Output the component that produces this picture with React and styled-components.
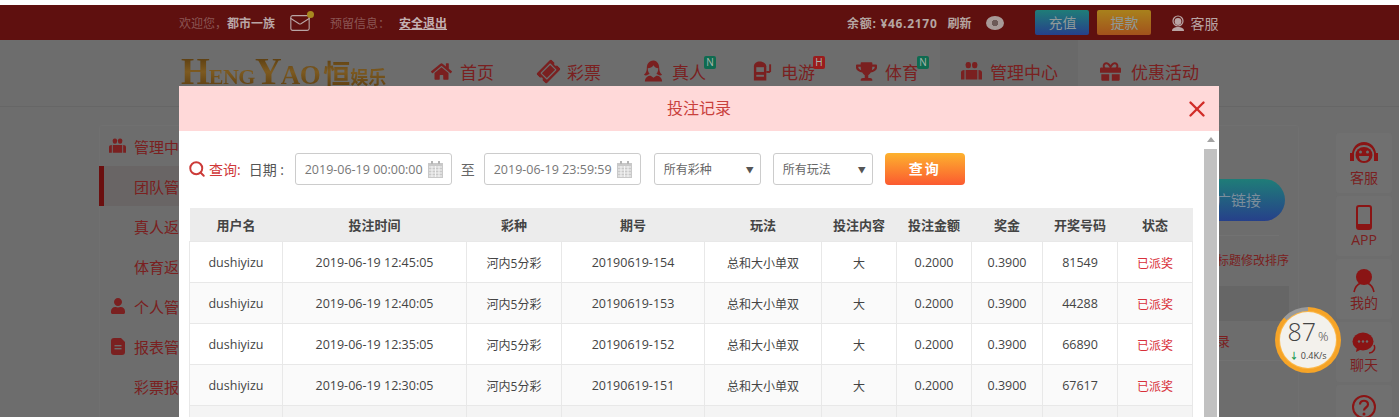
import styled, { createGlobalStyle } from 'styled-components';
import { FaHome, FaTicketAlt, FaTrophy, FaGift, FaUser } from 'react-icons/fa';
import { Search, X, Mail } from 'lucide-react';

const sans = `"Open Sans", "Noto Sans CJK SC", sans-serif`;
const wine = '#7a2020';

const navItems = [
  { label: '首页', width: 107, Icon: FaHome },
  { label: '彩票', width: 105, Icon: FaTicketAlt, tilt: true },
  { label: '真人', width: 109, draw: 'live', badge: 'N' },
  { label: '电游', width: 104, draw: 'slot', badge: 'H' },
  { label: '体育', width: 84, Icon: FaTrophy, badge: 'N' },
  { label: '管理中心', width: 138, draw: 'team', active: true },
  { label: '优惠活动', width: 120, Icon: FaGift, gap: 22, wide: true },
];

const sideItems = [
  { label: '管理中心', draw: 'team' },
  { label: '团队管理', active: true },
  { label: '真人返水' },
  { label: '体育返水' },
  { label: '个人管理', Icon: FaUser },
  { label: '报表管理', draw: 'report' },
  { label: '彩票报表' },
];

const columns = [
  ['用户名', 93], ['投注时间', 184], ['彩种', 95], ['期号', 143], ['玩法', 117],
  ['投注内容', 75], ['投注金额', 75], ['奖金', 71], ['开奖号码', 75], ['状态', 75],
];

const records = [
  { time: '12:45:05', issue: '154', code: '81549' },
  { time: '12:40:05', issue: '153', code: '44288' },
  { time: '12:35:05', issue: '152', code: '66890' },
  { time: '12:30:05', issue: '151', code: '67617' },
];

const GlobalStyle = createGlobalStyle`
  html, body { margin: 0; padding: 0; overflow: hidden; background: #fff; }
  * { box-sizing: border-box; }
`;

const LiveIcon = () => (
  <svg width="22" height="24" viewBox="0 0 22 24" fill={wine}>
    <path d="M11 1c-5 0-7 4-7 8 0 3-1 5-3 7 1 1 3 1 4 0l2-1c-1-1-2-3-2-6 2 0 5-1 6-3 1 2 3 3 5 3 0 3-1 5-2 6l2 1c1 1 3 1 4 0-2-2-3-4-3-7 0-4-2-8-6-8z" />
    <path d="M2 23c0-4 3-6 6-6l3 2 3-2c3 0 6 2 6 6z" />
  </svg>
);

const SlotIcon = () => (
  <svg width="22" height="22" viewBox="0 0 22 22" fill={wine}>
    <path d="M2 6c0-3 3-5 6-5s7 2 7 5v15H2z" />
    <rect x="4.5" y="7" width="8" height="5" fill="#6d6d6d" />
    <rect x="4.5" y="15" width="8" height="2" fill="#6d6d6d" />
    <rect x="18" y="4" width="2" height="8" />
    <rect x="15" y="11" width="4" height="2" />
  </svg>
);

const ReportIcon = () => (
  <svg width="14" height="17" viewBox="0 0 14 17" fill={wine}>
    <path d="M3 0h7l4 4v10c0 2-1 3-3 3H3c-2 0-3-1-3-3V3c0-2 1-3 3-3z" />
    <rect x="3.5" y="7" width="7" height="1.4" fill="#6d6d6d" />
    <rect x="3.5" y="10" width="7" height="1.4" fill="#6d6d6d" />
  </svg>
);

const TeamIcon = ({ size = 18 }) => (
  <svg width={size} height={size * 0.84} viewBox="0 0 18 15" fill={wine}>
    <rect x="4" y="0" width="4.500" height="5.500" rx="2" />
    <rect x="9.500" y="0" width="4.500" height="5.500" rx="2" />
    <path d="M0 9c0-1 1-2 3-2v8H0zM4 7h10v8H4zM15 7c2 0 3 1 3 2v6h-3z" />
  </svg>
);

const CalendarIcon = () => (
  <svg width="15" height="17" viewBox="0 0 15 17">
    <rect x="0" y="2" width="15" height="15" fill="#c9c9c9" />
    <rect x="3" y="0" width="2" height="3" fill="#b5b5b5" />
    <rect x="10" y="0" width="2" height="3" fill="#b5b5b5" />
    <path d="M1 6h13M1 9h13M1 12h13M1 15h13M4 5v11M7.500 5v11M11 5v11" stroke="#f4f4f4" strokeWidth="1" />
  </svg>
);

const AgentIcon = () => (
  <svg width="16" height="16" viewBox="0 0 16 16" fill="none">
    <circle cx="8" cy="6" r="5" stroke="#b9a5a5" strokeWidth="1.200" />
    <circle cx="8" cy="6.500" r="3.400" fill="#b9a5a5" />
    <path d="M2 16c0-3 3-4 6-4s6 1 6 4z" fill="#b9a5a5" />
  </svg>
);

const HeadsetIcon = () => (
  <svg width="28" height="26" viewBox="0 0 28 26" fill="#8a1414">
    <path d="M14 0C7 0 3 5 2 11H0v8h4v-8c1-5 5-8 10-8s9 3 10 8v8h4v-8h-2C25 5 21 0 14 0z" />
    <ellipse cx="14" cy="13" rx="8.500" ry="8" />
    <path d="M9 14h10c0 3-2 5-5 5s-5-2-5-5z" fill="#6d6d6d" />
    <circle cx="10.500" cy="10" r="1.500" fill="#6d6d6d" />
    <circle cx="17.500" cy="10" r="1.500" fill="#6d6d6d" />
  </svg>
);

const PhoneIcon = () => (
  <svg width="16" height="25" viewBox="0 0 16 25">
    <rect x="1" y="1" width="14" height="23" rx="2" fill="none" stroke="#8a1414" strokeWidth="2" />
    <rect x="1" y="19" width="14" height="5" fill="#8a1414" />
  </svg>
);

const PersonIcon = () => (
  <svg width="24" height="24" viewBox="0 0 24 24" fill="none">
    <circle cx="12" cy="8" r="8" fill="#8a1414" />
    <path d="M2 23c1-5 4-8 7-9M22 23c-1-5-4-8-7-9" stroke="#8a1414" strokeWidth="1.600" />
  </svg>
);

const ChatIcon = () => (
  <svg width="24" height="23" viewBox="0 0 24 23">
    <path d="M22 13c2 4-1 8-5 8" fill="none" stroke="#8a1414" strokeWidth="1.500" />
    <ellipse cx="11" cy="9.500" rx="10.500" ry="9" fill="#8a1414" />
    <path d="M5 15l-1 5 6-3z" fill="#8a1414" />
    <circle cx="7" cy="9.500" r="1.200" fill="#6d6d6d" />
    <circle cx="11" cy="9.500" r="1.200" fill="#6d6d6d" />
    <circle cx="15" cy="9.500" r="1.200" fill="#6d6d6d" />
  </svg>
);

const HelpIcon = () => (
  <svg width="24" height="24" viewBox="0 0 24 24" fill="none">
    <circle cx="12" cy="12" r="11" stroke="#8a1414" strokeWidth="2" />
    <path d="M8 9.500c0-5 8-5 8 0 0 3-4 3-4 6" stroke="#8a1414" strokeWidth="2.200" />
    <circle cx="12" cy="19" r="1.500" fill="#8a1414" />
  </svg>
);

const railItems = [
  { label: '客服', Icon: HeadsetIcon },
  { label: 'APP', Icon: PhoneIcon },
  { label: '我的', Icon: PersonIcon },
  { label: '聊天', Icon: ChatIcon },
  { label: '', Icon: HelpIcon },
];

const drawings = { live: LiveIcon, slot: SlotIcon, report: ReportIcon, team: TeamIcon };

const App = () => {
  return (
    <Page>
      <GlobalStyle />
      <TopBar>
        <Dim>欢迎您，</Dim>
        <Bright>都市一族</Bright>
        <MailButton>
          <Mail size={22} strokeWidth={1.2} color="#b9a5a5" />
          <MailDot />
        </MailButton>
        <Dim>预留信息：</Dim>
        <Logout>安全退出</Logout>
        <TopRight>
          <Balance>余额: ¥46.2170</Balance>
          <Refresh>刷新</Refresh>
          <EyeDot />
          <TopButton $from="#1f7d78" $to="#26408a">充值</TopButton>
          <TopButton $from="#a8811c" $to="#a2521c">提款</TopButton>
          <Service>
            <AgentIcon />
            <span>客服</span>
          </Service>
        </TopRight>
      </TopBar>

      <NavBar>
        <Logo>
          <LogoBig>H</LogoBig>
          <LogoSmall>ENG</LogoSmall>
          <LogoBig>Y</LogoBig>
          <LogoMid>AO</LogoMid>
          <LogoHan>恒</LogoHan>
          <LogoTail>娱乐</LogoTail>
        </Logo>
        {navItems.map(item => {
          const Drawn = drawings[item.draw];
          return (
            <NavItem key={item.label} $width={item.width} $active={item.active} $gap={item.gap}>
              <NavIcon $tilt={item.tilt}>
                {item.Icon ? <item.Icon size={21} color={wine} /> : <Drawn size={23} />}
              </NavIcon>
              <NavLabel $wide={item.wide}>
                {item.label}
                {item.badge && <Badge $hot={item.badge === 'H'}>{item.badge}</Badge>}
              </NavLabel>
            </NavItem>
          );
        })}
      </NavBar>

      <Content>
        <Panel>
          <Sidebar>
            {sideItems.map(item => {
              const Drawn = drawings[item.draw];
              return (
                <SideRow key={item.label} $active={item.active}>
                  <SideIcon>
                    {item.Icon && <item.Icon size={16} color={wine} />}
                    {Drawn && <Drawn />}
                  </SideIcon>
                  {item.label}
                </SideRow>
              );
            })}
          </Sidebar>
          <Main>
            <PromoButton>推广链接</PromoButton>
            <Rule />
            <Note>点击标题修改排序</Note>
            <GreyRow />
            <RecordRow>投注记录</RecordRow>
          </Main>
        </Panel>
        <Rail>
          {railItems.map(({ label, Icon }) => (
            <RailCard key={label || 'help'} $plain={!label}>
              <Icon />
              {label && <RailLabel>{label}</RailLabel>}
            </RailCard>
          ))}
        </Rail>
      </Content>

      <Modal>
        <ModalHead>
          投注记录
          <CloseButton><X size={26} strokeWidth={2.2} /></CloseButton>
        </ModalHead>
        <ModalBody>
          <ModalContent>
            <Filters>
              <SearchIcon size={18} strokeWidth={2.6} />
              <QueryLabel>查询:</QueryLabel>
              <DateLabel>日期 :</DateLabel>
              <DateField>
                2019-06-19 00:00:00
                <CalendarIcon />
              </DateField>
              <Until>至</Until>
              <DateField>
                2019-06-19 23:59:59
                <CalendarIcon />
              </DateField>
              <SelectField $width={107} $gap={13}>
                所有彩种
                <Arrow>▼</Arrow>
              </SelectField>
              <SelectField $width={100} $gap={12}>
                所有玩法
                <Arrow>▼</Arrow>
              </SelectField>
              <QueryButton>查询</QueryButton>
            </Filters>
            <Table>
              <colgroup>
                {columns.map(([name, width]) => <Col key={name} $width={width} />)}
              </colgroup>
              <thead>
                <tr>
                  {columns.map(([name]) => <Th key={name}>{name}</Th>)}
                </tr>
              </thead>
              <tbody>
                {records.map(row => (
                  <Tr key={row.issue}>
                    <Td>dushiyizu</Td>
                    <Td>2019-06-19 {row.time}</Td>
                    <Td $cn>河内5分彩</Td>
                    <Td>20190619-{row.issue}</Td>
                    <Td $cn>总和大小单双</Td>
                    <Td $cn>大</Td>
                    <Td>0.2000</Td>
                    <Td>0.3900</Td>
                    <Td>{row.code}</Td>
                    <Td $cn $red>已派奖</Td>
                  </Tr>
                ))}
                <BlankRow>
                  {columns.map(([name]) => <Td key={name} />)}
                </BlankRow>
              </tbody>
            </Table>
          </ModalContent>
          <ScrollTrack>
            <ScrollArrow />
            <ScrollThumb />
          </ScrollTrack>
        </ModalBody>
      </Modal>

      <SpeedRing>
        <SpeedInner>
          <SpeedValue>87<small>%</small></SpeedValue>
          <SpeedRate><i>↓</i> 0.4K/s</SpeedRate>
        </SpeedInner>
      </SpeedRing>
    </Page>
  );
};

const Page = styled.div`
  position: relative;
  width: 1399px;
  height: 417px;
  overflow: hidden;
  padding-top: 5px;
  background: #6d6d6d;
  font-family: ${sans};
  box-shadow: inset 0 5px 0 #fff;
`;

const TopBar = styled.div`
  display: flex;
  align-items: center;
  height: 35px;
  padding-left: 179px;
  background: #5f100f;
  font-size: 12px;
`;

const Dim = styled.span`
  color: #8b5654;
`;

const Bright = styled.span`
  color: #b9a5a5;
  font-weight: 700;
`;

const MailButton = styled.span`
  position: relative;
  display: flex;
  margin: 0 19px 0 14px;
`;

const MailDot = styled.i`
  position: absolute;
  top: -1px;
  right: -3px;
  width: 7px;
  height: 7px;
  border-radius: 50%;
  background: #a8891f;
`;

const Logout = styled.span`
  margin-left: 9px;
  color: #c4b2b2;
  font-weight: 700;
  text-decoration: underline;
`;

const TopRight = styled.div`
  display: flex;
  align-items: center;
  margin-left: 400px;
`;

const Balance = styled.span`
  color: #b5a6a2;
  font-weight: 700;
  letter-spacing: 0.7px;
  white-space: nowrap;
`;

const Refresh = styled(Balance)`
  margin-left: 10px;
  letter-spacing: 0;
`;

const EyeDot = styled.i`
  width: 18px;
  height: 14px;
  margin: 0 31px 0 15px;
  border-radius: 50%;
  background: radial-gradient(circle, #6d5a58 0 3px, #a89a98 3.500px);
`;

const TopButton = styled.span`
  width: 54px;
  height: 25px;
  margin-right: 8px;
  border-radius: 2px;
  background: linear-gradient(${p => p.$from}, ${p => p.$to});
  color: #8f9a9a;
  font-size: 14px;
  line-height: 25px;
  text-align: center;
`;

const Service = styled.span`
  display: flex;
  align-items: center;
  gap: 4px;
  margin-left: 11px;
  color: #b9a5a5;
  font-size: 14px;
`;

const NavBar = styled.div`
  display: flex;
  height: 67px;
  padding-left: 181px;
  background: #6d6d6d;
  border-bottom: 1px solid #666;
`;

const Logo = styled.div`
  display: flex;
  flex: none;
  align-items: baseline;
  width: 250px;
  height: 36px;
  margin-top: 12px;
  background: linear-gradient(#4f340c, #7d5a20 55%, #5d3f12);
  background-clip: text;
  -webkit-background-clip: text;
  color: transparent;
  font-family: "Liberation Serif", serif;
  font-weight: 700;
  line-height: 40px;
  white-space: nowrap;
`;

const LogoBig = styled.span`
  font-size: 37px;
  letter-spacing: -1px;
`;

const LogoSmall = styled.span`
  font-size: 22px;
  letter-spacing: -0.5px;
`;

const LogoMid = styled.span`
  font-size: 27px;
  letter-spacing: -0.5px;
`;

const LogoHan = styled.span`
  margin-left: 3px;
  font-family: "Noto Sans CJK SC", sans-serif;
  font-size: 27px;
`;

const LogoTail = styled.span`
  font-family: "Noto Sans CJK SC", sans-serif;
  font-size: 18px;
`;

const NavItem = styled.div`
  display: flex;
  flex: none;
  align-items: center;
  width: ${p => p.$width}px;
  height: 66px;
  margin-left: ${p => p.$gap || 0}px;
  padding-left: ${p => (p.$active ? '21px' : '0')};
  padding-bottom: 4px;
  background: ${p => (p.$active ? '#696969' : 'transparent')};
`;

const NavIcon = styled.span`
  display: flex;
  justify-content: center;
  width: 21px;
  transform: ${p => (p.$tilt ? 'rotate(-45deg)' : 'none')};
`;

const NavLabel = styled.span`
  position: relative;
  margin-left: ${p => (p.$wide ? 10 : 8)}px;
  color: ${wine};
  font-size: 17px;
  white-space: nowrap;
`;

const Badge = styled.b`
  position: absolute;
  top: -3px;
  right: -10px;
  width: 12px;
  height: 13px;
  border-radius: 2px;
  background: ${p => (p.$hot ? '#9a1c1c' : '#0f6b50')};
  color: #a9b5ad;
  font-size: 10px;
  font-weight: 400;
  line-height: 13px;
  text-align: center;
`;

const Content = styled.div`
  display: flex;
  padding: 18px 0 0 99px;
`;

const Panel = styled.div`
  display: flex;
  width: 1200px;
  height: 300px;
  border: 1px solid #707070;
  border-radius: 3px;
`;

const Sidebar = styled.div`
  width: 200px;
  margin-left: -1px;
`;

const SideRow = styled.div`
  display: flex;
  align-items: center;
  height: 40px;
  border-left: 5px solid ${p => (p.$active ? '#6b0f0f' : 'transparent')};
  background: ${p => (p.$active ? '#696565' : 'transparent')};
  color: ${wine};
  font-size: 15px;
  white-space: nowrap;
`;

const SideIcon = styled.span`
  display: flex;
  justify-content: center;
  width: 17px;
  margin: 0 8px 0 5px;
`;

const Main = styled.div`
  display: flex;
  flex: 1;
  flex-direction: column;
  align-items: flex-end;
  padding-top: 53px;
`;

const PromoButton = styled.div`
  width: 108px;
  height: 42px;
  margin-right: 13px;
  border-radius: 21px;
  background: linear-gradient(#1f7d78, #26408a);
  color: #7c8e9c;
  font-size: 15px;
  line-height: 42px;
  text-align: center;
`;

const Rule = styled.div`
  width: 100px;
  height: 1px;
  margin: 14px 19px 0 0;
  background: #727272;
`;

const Note = styled.div`
  margin: 16px 9px 0 0;
  color: ${wine};
  font-size: 12px;
  line-height: 17px;
`;

const GreyRow = styled.div`
  width: 100px;
  height: 35px;
  margin: 17px 9px 0 0;
  background: #666;
`;

const RecordRow = styled.div`
  width: 130px;
  height: 40px;
  margin-right: 9px;
  padding-right: 59px;
  border-bottom: 1px solid #727272;
  color: ${wine};
  font-size: 13px;
  line-height: 40px;
  text-align: right;
  white-space: nowrap;
`;

const Rail = styled.div`
  display: flex;
  flex-direction: column;
  gap: 3px;
  width: 56px;
  margin: 8px 0 0 37px;
`;

const RailCard = styled.div`
  display: flex;
  flex: none;
  flex-direction: column;
  align-items: center;
  justify-content: ${p => (p.$plain ? 'flex-start' : 'center')};
  height: 60px;
  padding-top: ${p => (p.$plain ? '10px' : '2px')};
  border-radius: 3px;
  background: #707070;
`;

const RailLabel = styled.span`
  color: ${wine};
  font-size: 14px;
  line-height: 19px;
`;

const Modal = styled.div`
  position: absolute;
  top: 86px;
  left: 179px;
  display: flex;
  flex-direction: column;
  width: 1040px;
  height: 331px;
  overflow: hidden;
  background: #fff;
`;

const ModalHead = styled.div`
  position: relative;
  flex: none;
  height: 45px;
  background: #ffd9d9;
  color: #c9403c;
  font-size: 16px;
  line-height: 45px;
  text-align: center;
`;

const CloseButton = styled.span`
  position: absolute;
  top: 10px;
  right: 9px;
  display: flex;
  color: #d12c28;
`;

const ModalBody = styled.div`
  display: flex;
  flex: 1;
  min-height: 0;
`;

const ModalContent = styled.div`
  flex: none;
  width: 1024px;
  padding: 22px 11px 0 9px;
`;

const Filters = styled.div`
  display: flex;
  align-items: center;
  height: 32px;
`;

const SearchIcon = styled(Search)`
  flex: none;
  color: #cc3b38;
`;

const QueryLabel = styled.span`
  margin-left: 3px;
  color: #d0393a;
  font-size: 14px;
`;

const DateLabel = styled.span`
  width: 46px;
  margin-left: 8px;
  color: #555;
  font-size: 14px;
  white-space: nowrap;
`;

const DateField = styled.div`
  display: flex;
  flex: none;
  align-items: center;
  justify-content: space-between;
  width: 157px;
  height: 32px;
  padding: 0 8px 0 9px;
  border: 1px solid #ccc;
  border-radius: 3px;
  color: #777;
  font-size: 12.500px;
  white-space: nowrap;
`;

const Until = styled.span`
  width: 32px;
  color: #666;
  font-size: 14px;
  text-align: center;
`;

const SelectField = styled.div`
  display: flex;
  flex: none;
  align-items: center;
  justify-content: space-between;
  width: ${p => p.$width}px;
  height: 32px;
  margin-left: ${p => p.$gap}px;
  padding: 0 6px 0 9px;
  border: 1px solid #ccc;
  border-radius: 3px;
  color: #666;
  font-size: 12px;
`;

const Arrow = styled.span`
  color: #555;
  font-size: 8px;
`;

const QueryButton = styled.div`
  width: 80px;
  height: 32px;
  margin-left: 12px;
  border-radius: 4px;
  background: linear-gradient(#fdb22e, #fb5a30);
  color: #fff;
  font-size: 14px;
  font-weight: 700;
  letter-spacing: 2px;
  line-height: 32px;
  text-align: center;
`;

const Table = styled.table`
  width: 1003px;
  margin: 23px 0 0 1px;
  border-collapse: collapse;
  table-layout: fixed;
`;

const Col = styled.col`
  width: ${p => p.$width}px;
`;

const Th = styled.th`
  height: 33px;
  padding: 0;
  background: #ececec;
  color: #444;
  font-size: 13px;
  font-weight: 700;
`;

const Tr = styled.tr`
  height: 41px;
  background: #fff;

  &:nth-child(even) {
    background: #fafafa;
  }
`;

const BlankRow = styled(Tr)`
  &&& {
    background: #f4f4f4;
  }
`;

const Td = styled.td`
  padding: 2px 0 0;
  border: 1px solid #e8e8e8;
  color: ${p => (p.$red ? '#d8303a' : '#444')};
  font-size: ${p => (p.$cn ? '12px' : '12.5px')};
  text-align: center;
  white-space: nowrap;
`;

const ScrollTrack = styled.div`
  display: flex;
  flex: none;
  flex-direction: column;
  width: 13px;
  margin-left: 1px;
`;

const ScrollArrow = styled.div`
  flex: none;
  width: 0;
  height: 0;
  margin: 6px auto 7px;
  border: 4px solid transparent;
  border-top: 0;
  border-bottom: 5px solid #a3a3a3;
`;

const ScrollThumb = styled.div`
  flex: 1;
  background: #c1c1c1;
`;

const SpeedRing = styled.div`
  position: absolute;
  top: 307px;
  left: 1275px;
  display: flex;
  align-items: center;
  justify-content: center;
  width: 66px;
  height: 66px;
  border-radius: 50%;
  background: conic-gradient(#f6a427 0 87%, #9a9a9a 87% 100%);
`;

const SpeedInner = styled.div`
  display: flex;
  flex-direction: column;
  align-items: center;
  justify-content: center;
  width: 56px;
  height: 56px;
  border-radius: 50%;
  background: #f3f1ec;
  box-shadow: 0 0 0 1px #fbb84a;
`;

const SpeedValue = styled.div`
  color: #444;
  font-size: 25px;
  font-weight: 300;
  line-height: 26px;

  small {
    margin-left: 2px;
    font-size: 13px;
  }
`;

const SpeedRate = styled.div`
  color: #444;
  font-size: 9px;
  line-height: 13px;

  i {
    color: #1d9a54;
    font-style: normal;
    font-weight: 700;
  }
`;

export default App;
